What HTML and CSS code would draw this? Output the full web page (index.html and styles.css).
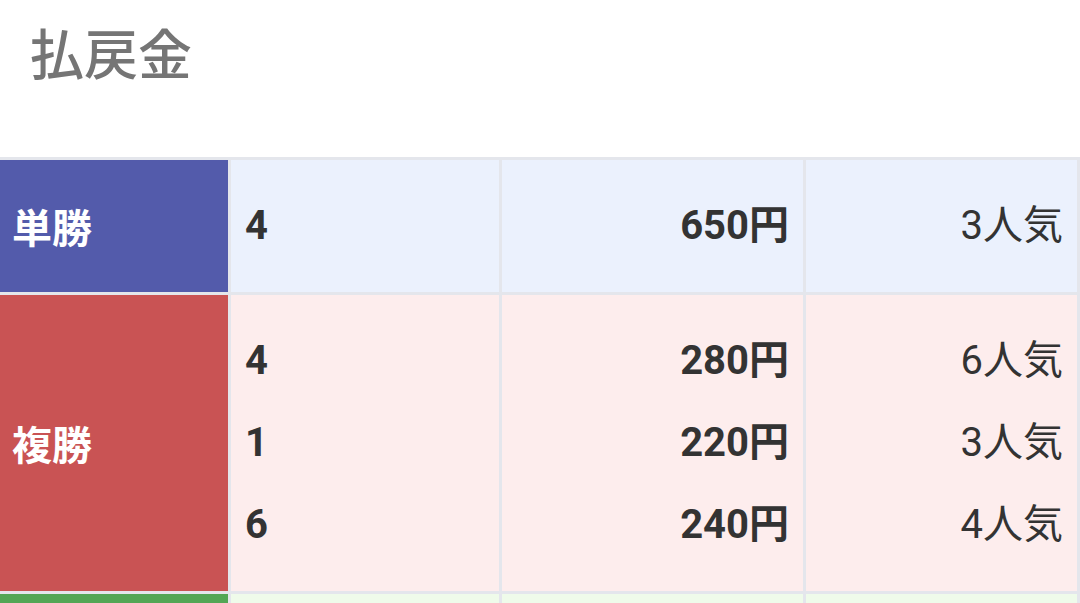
FILE: index.html
```html
<!DOCTYPE html>
<html lang="ja">
<head>
<meta charset="utf-8">
<title>払戻金</title>
<link rel="stylesheet" href="styles.css">
</head>
<body>
<h2 class="title">払戻金</h2>
<div class="payout">
  <div class="head head-blue">単勝</div>
  <div class="cell cell-blue num">4</div>
  <div class="cell cell-blue yen">650円</div>
  <div class="cell cell-blue pop">3人気</div>

  <div class="head head-red">複勝</div>
  <div class="cell cell-red num">4<br>1<br>6</div>
  <div class="cell cell-red yen">280円<br>220円<br>240円</div>
  <div class="cell cell-red pop">6人気<br>3人気<br>4人気</div>

  <div class="head head-green"></div>
  <div class="cell cell-green"></div>
  <div class="cell cell-green"></div>
  <div class="cell cell-green"></div>
</div>
</body>
</html>
```

FILE: styles.css
```css
html, body {
  margin: 0;
  padding: 0;
  background: #ffffff;
}
body {
  font-family: Roboto, "Noto Sans CJK JP", sans-serif;
  overflow: hidden;
}
.title {
  margin: 30px 0 0 0;
  padding-left: 30px;
  font-size: 54px;
  line-height: 54px;
  font-weight: 500;
  color: #757575;
}
.payout {
  margin-top: 73px;
  display: grid;
  grid-template-columns: 228px 268px 301px 271px;
  gap: 3px;
  padding: 3px 3px 0 0;
  background: #e4e6ec;
}
.head {
  display: flex;
  align-items: center;
  padding: 0 12px;
  color: #ffffff;
  font-size: 40px;
  font-weight: 700;
}
.head-blue { background: #535bab; }
.head-red { background: #c95354; }
.head-green { background: #53a655; min-height: 132px; }
.cell {
  padding: 25px 14px;
  font-size: 40px;
  line-height: 82px;
  color: #333333;
}
.cell-blue { background: #ebf1fd; }
.cell-red { background: #fdeded; }
.cell-green { background: #effbea; }
.num { font-weight: 700; }
.yen { font-weight: 700; text-align: right; }
.pop { font-weight: 400; text-align: right; }
```
